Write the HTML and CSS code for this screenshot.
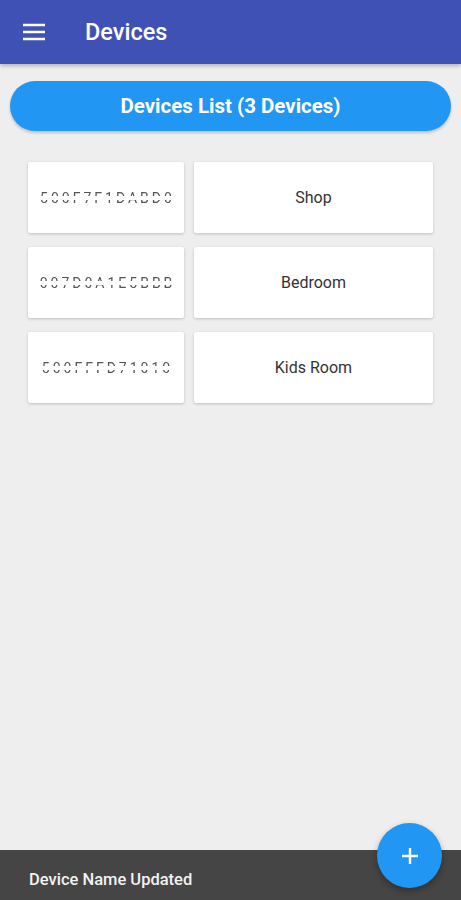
FILE: index.html
```html
<!DOCTYPE html>
<html lang="en">
  <head>
    <meta charset="UTF-8" />
    <meta name="viewport" content="width=device-width, initial-scale=1.0" />
    <title>Devices</title>
    <link rel="stylesheet" href="styles.css">
  </head>
  <body>
    <header class="app-bar">
      <svg class="menu-icon" width="24" height="24" viewBox="0 0 24 24">
        <path d="M1 5h22M1 12h22M1 19h22" stroke="#fff" stroke-width="2.6" fill="none" />
      </svg>
      <h1 class="app-title">Devices</h1>
    </header>

    <main class="content">
      <button class="list-button" type="button">Devices List (3 Devices)</button>

      <div class="device-list">
        <div class="card card-id"><span class="device-id">500F7F1DABD0</span></div>
        <div class="card card-name">Shop</div>

        <div class="card card-id"><span class="device-id">007D0A1E5BBB</span></div>
        <div class="card card-name">Bedroom</div>

        <div class="card card-id"><span class="device-id">500FFFD71010</span></div>
        <div class="card card-name">Kids Room</div>
      </div>
    </main>

    <div class="snackbar">Device Name Updated</div>

    <button class="fab" type="button" aria-label="Add device">
      <svg width="20" height="20" viewBox="0 0 20 20">
        <path d="M10 2v16M2 10h16" stroke="#fff" stroke-width="2.4" fill="none" />
      </svg>
    </button>
  </body>
</html>
```

FILE: styles.css
```css
body {
  font-family: Roboto, "Liberation Sans", sans-serif;
  background-color: #eeeeee;
  margin: 0;
  height: 900px;
  overflow: hidden;
}
.app-bar {
  height: 64px;
  background-color: #4051b5;
  display: flex;
  align-items: center;
  padding-left: 22px;
  box-shadow: 0 2px 4px rgba(0, 0, 0, 0.25);
}
.menu-icon {
  display: block;
}
.app-title {
  margin: 0 0 0 39px;
  color: #fff;
  font-size: 23.5px;
  font-weight: 500;
}
.content {
  padding: 17px 10px 0;
}
.list-button {
  display: block;
  width: 100%;
  height: 50px;
  border: none;
  border-radius: 25px;
  background-color: #2196f3;
  color: #fff;
  font-family: Roboto, "Liberation Sans", sans-serif;
  font-size: 20.5px;
  font-weight: 700;
  box-shadow: 0 2px 3px rgba(0, 0, 0, 0.2);
}
.device-list {
  display: grid;
  grid-template-columns: 156px 1fr;
  grid-auto-rows: 71px;
  column-gap: 10px;
  row-gap: 14px;
  margin: 31px 18px 0;
}
.card {
  background-color: #fff;
  box-shadow: 0 1px 3px rgba(0, 0, 0, 0.2);
  border-radius: 2px;
  display: flex;
  align-items: center;
  justify-content: center;
}
.device-id {
  font-size: 14px;
  letter-spacing: 3px;
  color: #555;
  margin-left: 3px;
  -webkit-mask-image: linear-gradient(to bottom, #000 38%, transparent 38%, transparent 62%, #000 62%);
  mask-image: linear-gradient(to bottom, #000 38%, transparent 38%, transparent 62%, #000 62%);
}
.card-name {
  font-size: 16px;
  color: #333;
}
.snackbar {
  position: fixed;
  left: 0;
  right: 0;
  bottom: 0;
  height: 50px;
  background-color: #454545;
  color: #f2f2f2;
  font-size: 16.5px;
  font-weight: 500;
  padding-left: 29px;
  display: flex;
  align-items: center;
  padding-top: 9px;
  box-sizing: border-box;
}
.fab {
  position: fixed;
  left: 377px;
  top: 823px;
  width: 65px;
  height: 65px;
  border: none;
  border-radius: 50%;
  background-color: #2196f3;
  display: flex;
  align-items: center;
  justify-content: center;
  box-shadow: 0 3px 6px rgba(0, 0, 0, 0.3);
}
```
